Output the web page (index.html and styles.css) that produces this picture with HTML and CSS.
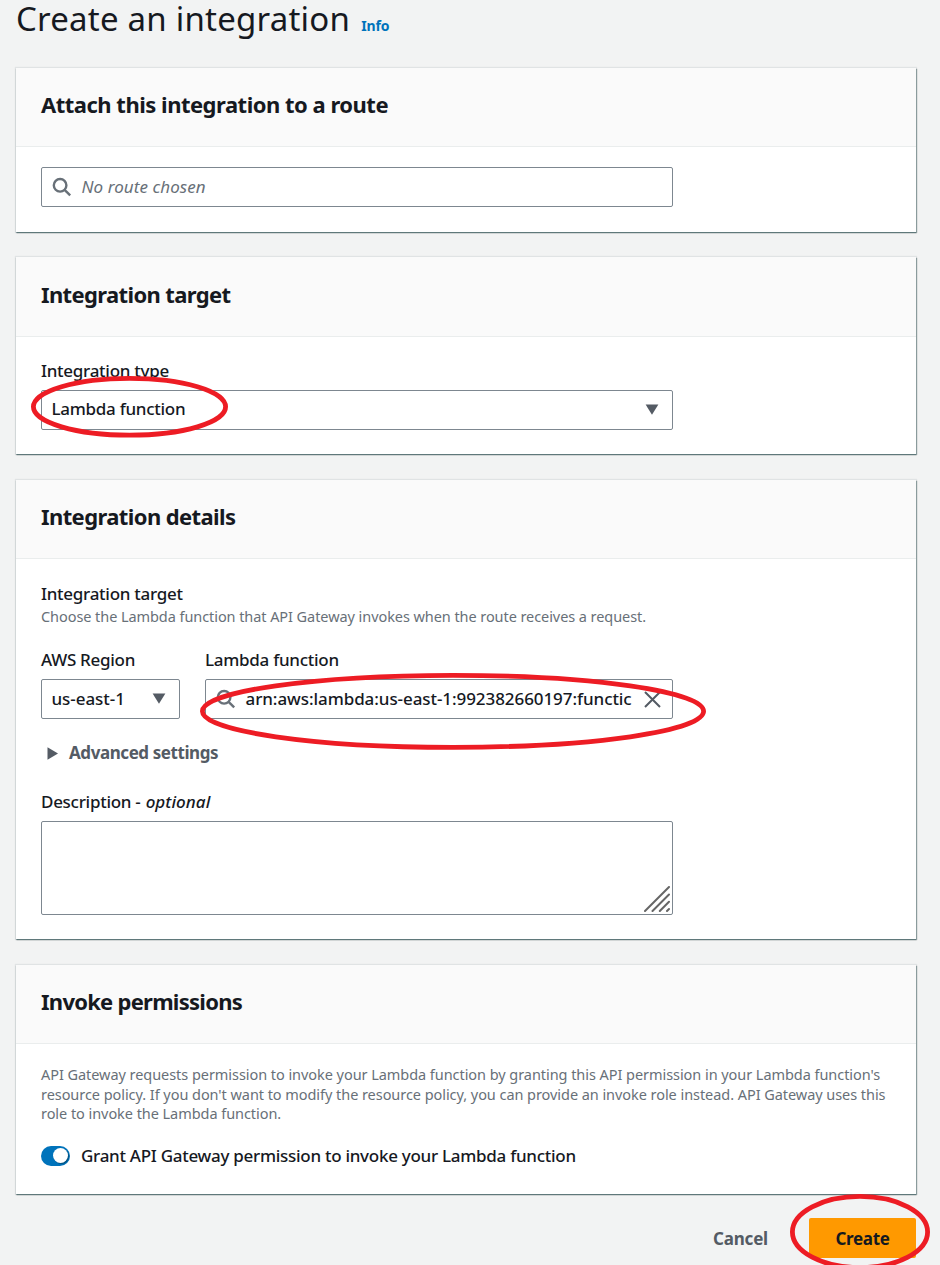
FILE: index.html
```html
<!DOCTYPE html>
<html lang="en">
<head>
<meta charset="utf-8">
<title>Create an integration</title>
<link rel="stylesheet" href="styles.css">
</head>
<body>
<main class="page">
  <header class="page-header">
    <h1 class="page-title">Create an integration</h1>
    <a class="info">Info</a>
  </header>

  <section class="card card-route">
    <h2 class="card-header">Attach this integration to a route</h2>
    <div class="card-body">
      <div class="control">
        <svg class="icon-search" viewBox="0 0 20 20"><circle cx="8.1" cy="8.3" r="6.3"/><path d="M12.6 12.8 18.2 18.3"/></svg>
        <span class="placeholder">No route chosen</span>
      </div>
    </div>
  </section>

  <section class="card card-target">
    <h2 class="card-header">Integration target</h2>
    <div class="card-body">
      <div class="label">Integration type</div>
      <div class="control">
        <span class="value">Lambda function</span>
        <svg class="caret" viewBox="0 0 14 11"><path d="M.6.5h12.8L7 10.8z"/></svg>
      </div>
    </div>
  </section>

  <section class="card card-details">
    <h2 class="card-header">Integration details</h2>
    <div class="card-body">
      <div class="label">Integration target</div>
      <div class="hint">Choose the Lambda function that API Gateway invokes when the route receives a request.</div>
      <div class="fields">
        <div class="field-region">
          <div class="label">AWS Region</div>
          <div class="control">
            <span class="value region">us-east-1</span>
            <svg class="caret" viewBox="0 0 14 11"><path d="M.6.5h12.8L7 10.8z"/></svg>
          </div>
        </div>
        <div class="field-lambda">
          <div class="label">Lambda function</div>
          <div class="control">
            <svg class="icon-search" viewBox="0 0 20 20"><circle cx="8.1" cy="8.3" r="6.3"/><path d="M12.6 12.8 18.2 18.3"/></svg>
            <span class="arn">arn:aws:lambda:us-east-1:992382660197:functic</span>
            <svg class="icon-close" viewBox="0 0 17 17"><path d="M1 1l15 15M16 1 1 16"/></svg>
          </div>
        </div>
      </div>
      <div class="expander">
        <svg class="arrow" viewBox="0 0 11 13"><path d="M.5.2 11 6.5.5 12.8z"/></svg>
        <span>Advanced settings</span>
      </div>
      <div class="label label-description">Description - <i>optional</i></div>
      <div class="textarea">
        <svg class="grip" viewBox="0 0 26 26"><path d="M1 25 25 1M8.5 25 25 8.5M15.8 25 25 15.8M23 25l2-2"/></svg>
      </div>
    </div>
  </section>

  <section class="card card-permissions">
    <h2 class="card-header">Invoke permissions</h2>
    <div class="card-body">
      <p class="text">API Gateway requests permission to invoke your Lambda function by granting this API permission in your Lambda function's<br>resource policy. If you don't want to modify the resource policy, you can provide an invoke role instead. API Gateway uses this<br>role to invoke the Lambda function.</p>
      <div class="toggle-row">
        <span class="toggle"><span class="knob"></span></span>
        <span class="toggle-label">Grant API Gateway permission to invoke your Lambda function</span>
      </div>
    </div>
  </section>

  <footer class="actions">
    <span class="cancel">Cancel</span>
    <span class="create">Create</span>
  </footer>

  <svg class="annotations" viewBox="0 0 940 1265">
    <ellipse cx="129.5" cy="406.8" rx="96.1" ry="28.4"/>
    <ellipse cx="453" cy="711.3" rx="250.6" ry="36"/>
    <ellipse cx="860" cy="1232" rx="67.6" ry="35.6"/>
  </svg>
</main>
</body>
</html>
```
FILE: styles.css
```css
* { box-sizing: border-box; }
body {
  margin: 0;
  background: #f2f3f3;
  color: #16191f;
  font: 500 17px/24px "Noto Sans", sans-serif;
  letter-spacing: -0.28px;
}
h1, h2, p { margin: 0; }
svg { display: block; flex: none; }
.page {
  position: relative;
  height: 1265px;
  overflow: hidden;
  padding: 0 24px 0 16px;
}
.page-header {
  display: flex;
  align-items: baseline;
  gap: 11px;
  height: 68px;
}
.page-title {
  font-size: 33px;
  font-weight: 400;
  line-height: 38px;
  letter-spacing: 0.22px;
}
.info {
  color: #0073bb;
  font-size: 14px;
  font-weight: 700;
  letter-spacing: -0.15px;
}
.card {
  width: 900px;
  margin-bottom: 25px;
  background: #fff;
  box-shadow: 0 1px 1px 0 rgba(0, 40, 45, .35), 1px 1px 1px 0 rgba(0, 40, 45, .25), 1px 1px 1px 0 rgba(0, 40, 45, .12), 0 0 1px 1px rgba(0, 28, 36, .07);
}
.card-route { height: 164px; }
.card-target { height: 197px; margin-bottom: 26px; }
.card-details { height: 459px; margin-bottom: 26px; }
.card-permissions { height: 229px; margin-bottom: 24px; }
.card-header {
  height: 79px;
  padding: 21px 25px 0;
  border-bottom: 1px solid #eaeded;
  background: #fafafa;
  font-size: 22px;
  font-weight: 700;
  line-height: 30px;
  letter-spacing: -0.6px;
}
.card-route .card-header { letter-spacing: -0.5px; }
.card-target .card-header { height: 80px; padding-top: 22px; letter-spacing: -0.64px; }
.card-permissions .card-header { letter-spacing: -0.74px; }
.card-body { padding: 20px 25px 0; }
.card-target .card-body { padding-top: 22px; }
.card-details .card-body { padding-top: 23px; }
.control {
  display: flex;
  align-items: center;
  width: 631.5px;
  height: 39.5px;
  padding: 0 10px 0 9.5px;
  border: 1px solid #7d8790;
  border-radius: 2px;
}
.icon-search {
  width: 20px;
  height: 20px;
  margin-right: 10px;
  fill: none;
  stroke: #687078;
  stroke-width: 2.4;
}
.placeholder {
  color: #687078;
  font-style: italic;
  font-weight: 400;
  letter-spacing: 0.07px;
}
.card-target .label { margin-bottom: 7px; }
.card-target .value { margin-top: -1px; }
.caret {
  width: 14px;
  height: 11px;
  margin: -1px 3px 0 auto;
  fill: #545b64;
}
.hint, .text {
  color: #687078;
  font-size: 14.5px;
  font-weight: 400;
  letter-spacing: -0.07px;
}
.hint { line-height: 20px; }
.fields {
  display: flex;
  gap: 25px;
  margin-top: 22px;
}
.field-region, .field-region .control { width: 139px; }
.field-lambda, .field-lambda .control { width: 467.5px; }
.fields .control { height: 40px; }
.fields .label { margin-bottom: 7px; }
.region { letter-spacing: -0.05px; }
.arn { letter-spacing: -0.07px; white-space: nowrap; }
.icon-close {
  width: 17px;
  height: 17px;
  margin-left: auto;
  margin-right: 1px;
  fill: none;
  stroke: #545b64;
  stroke-width: 2;
}
.expander {
  display: flex;
  align-items: center;
  gap: 11px;
  margin-top: 22px;
  padding-left: 6px;
  color: #545b64;
  font-weight: 700;
  letter-spacing: -0.43px;
}
.arrow { width: 11px; height: 13px; fill: #545b64; }
.label-description { margin: 25px 0 7px; }
.label-description i { letter-spacing: 0.05px; margin-left: 1px; }
.textarea {
  display: flex;
  align-items: flex-end;
  justify-content: flex-end;
  width: 631.5px;
  height: 94px;
  padding: 0 2px 2px 0;
  border: 1px solid #7d8790;
  border-radius: 2px;
}
.grip {
  width: 26px;
  height: 26px;
  fill: none;
  stroke: #666;
  stroke-width: 2;
  stroke-linecap: round;
}
.card-permissions .card-body { padding-top: 21px; }
.text { line-height: 19.6px; white-space: nowrap; letter-spacing: -0.055px; }
.toggle-row {
  display: flex;
  align-items: center;
  gap: 11px;
  margin-top: 20px;
}
.toggle {
  display: flex;
  align-items: center;
  justify-content: flex-end;
  width: 29px;
  height: 20px;
  padding-right: 2px;
  border-radius: 10px;
  background: #0073bb;
}
.knob {
  width: 15px;
  height: 15px;
  border-radius: 50%;
  background: #fff;
  box-shadow: 1px 1px 1px rgba(0, 28, 36, .4);
}
.actions {
  display: flex;
  align-items: center;
  justify-content: flex-end;
  width: 900px;
  gap: 41px;
  font-weight: 700;
}
.cancel { padding-top: 1px; color: #545b64; letter-spacing: -0.18px; }
.create {
  width: 107px;
  height: 40px;
  padding-top: 1px;
  border-radius: 2px;
  background: #ff9900;
  line-height: 40px;
  text-align: center;
  letter-spacing: -0.33px;
}
.annotations {
  position: absolute;
  left: 0;
  top: 0;
  width: 940px;
  height: 1265px;
  fill: none;
  stroke: #ed1c24;
  stroke-width: 4.8;
  pointer-events: none;
}
```
